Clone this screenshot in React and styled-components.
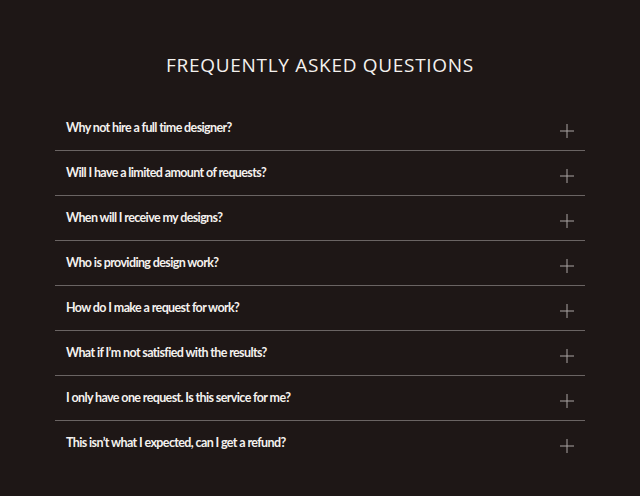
import styled, { createGlobalStyle } from "styled-components";

const GlobalStyle = createGlobalStyle`
  html, body {
    margin: 0;
    padding: 0;
    background: #1e1716;
  }
`;

const Page = styled.div`
  width: 640px;
  height: 496px;
  background: #1e1716;
  display: flex;
  flex-direction: column;
  align-items: center;
  overflow: hidden;
`;

const Heading = styled.h1`
  margin: 52px 0 0;
  height: 27px;
  line-height: 27px;
  font-family: "Open Sans", "Liberation Sans", sans-serif;
  font-weight: 400;
  font-size: 19px;
  letter-spacing: 0.7px;
  color: #f4f1ee;
`;

const List = styled.div`
  width: 530px;
  margin-top: 27px;
  display: flex;
  flex-direction: column;
`;

const Row = styled.div`
  height: 44px;
  display: flex;
  align-items: center;
  justify-content: space-between;
  padding: 0 11px;
  border-bottom: 1px solid ${(p) => (p.last ? "transparent" : "#6a6463")};
`;

const Question = styled.span`
  font-family: Lato, "DejaVu Sans Condensed", sans-serif;
  font-weight: 700;
  font-size: 12.5px;
  letter-spacing: -0.62px;
  color: #f4f1ee;
  margin-top: -2px;
`;

const Plus = styled.svg`
  width: 14px;
  height: 14px;
  margin-top: 6px;
  flex: none;
`;

const questions = [
  "Why not hire a full time designer?",
  "Will I have a limited amount of requests?",
  "When will I receive my designs?",
  "Who is providing design work?",
  "How do I make a request for work?",
  "What if I’m not satisfied with the results?",
  "I only have one request. Is this service for me?",
  "This isn’t what I expected, can I get a refund?",
];

export default function App() {
  return (
    <Page>
      <GlobalStyle />
      <Heading>FREQUENTLY ASKED QUESTIONS</Heading>
      <List>
        {questions.map((q, i) => (
          <Row key={q} last={i === questions.length - 1}>
            <Question>{q}</Question>
            <Plus viewBox="0 0 14 14">
              <path d="M7 0v14M0 7h14" stroke="#aaa5a3" strokeWidth="1" />
            </Plus>
          </Row>
        ))}
      </List>
    </Page>
  );
}
